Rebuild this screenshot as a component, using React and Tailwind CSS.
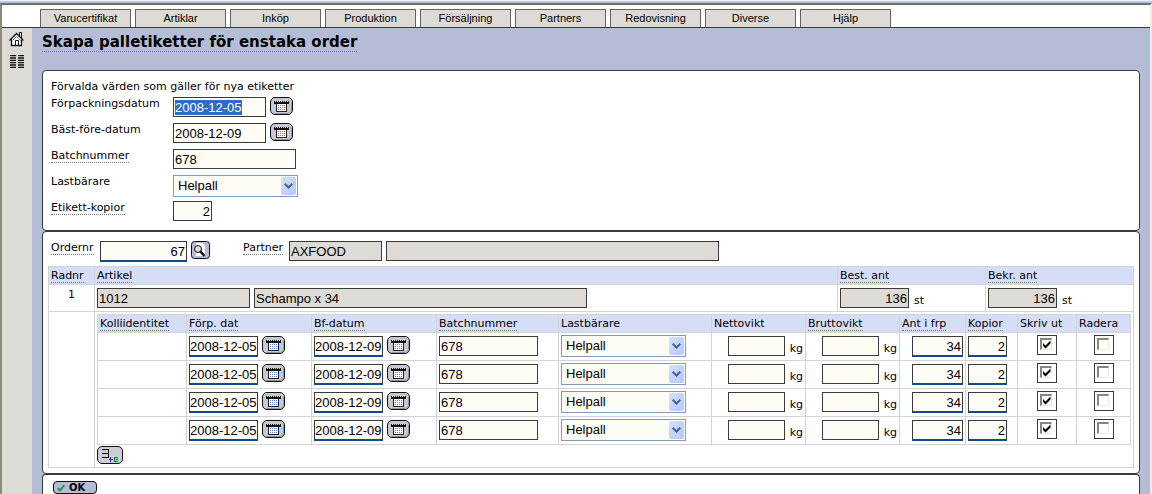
import { useEffect, useRef } from 'react';

const tabs = ['Varucertifikat', 'Artiklar', 'Inköp', 'Produktion', 'Försäljning', 'Partners', 'Redovisning', 'Diverse', 'Hjälp'];

const rows = [1, 2, 3, 4];

const columns = [
  { title: 'Kolliidentitet', dotted: true },
  { title: 'Förp. dat', dotted: true, width: 'w-[125px]' },
  { title: 'Bf-datum', dotted: true, width: 'w-[125px]' },
  { title: 'Batchnummer', dotted: true, width: 'w-[122px]' },
  { title: 'Lastbärare', width: 'w-[153px]' },
  { title: 'Nettovikt', width: 'w-[94px]' },
  { title: 'Bruttovikt', dotted: true, width: 'w-[94px]' },
  { title: 'Ant i frp', dotted: true, width: 'w-[66px]' },
  { title: 'Kopior', dotted: true, width: 'w-[52px]' },
  { title: 'Skriv ut', width: 'w-[59px]' },
  { title: 'Radera', width: 'w-[54px]' },
];

function Hint({ children }) {
  return <span className="border-b border-dotted border-[#777]">{children}</span>;
}

function Field({ className = '', required, readOnly, tight, ref, ...props }) {
  return (
    <input
      ref={ref}
      type="text"
      readOnly={readOnly}
      className={`block shrink-0 border border-[#3a3a3a] font-['Liberation_Sans',Arial,sans-serif] text-[13px] leading-[18px] outline-none selection:bg-[#316ac5] selection:text-white ${
        required ? 'h-[21px] border-b-2 border-b-[#104a8c]' : 'h-5'
      } ${readOnly ? 'bg-[#dedbd6]' : 'bg-[#fffcf6]'} ${tight ? 'px-0' : 'px-px'} ${className}`}
      {...props}
    />
  );
}

function CarrierSelect(props) {
  return (
    <div className="relative w-[125px] shrink-0">
      <select
        className="block h-[22px] w-full appearance-none border border-[#7f9db9] bg-[#fffcf6] pl-1 font-['Liberation_Sans',Arial,sans-serif] text-[13px] leading-5 outline-none"
        {...props}
      >
        <option>Helpall</option>
        <option>Halvpall</option>
      </select>
      <span className="pointer-events-none absolute inset-y-0.5 right-0.5 flex w-[15px] items-center justify-center rounded-xs bg-linear-to-br from-[#d3e0fe] to-[#b3c8f8]">
        <svg width="9" height="6" viewBox="0 0 9 6" fill="none" stroke="#4d6185" strokeWidth="2">
          <path d="M0.7 0.7 4.5 4.5 8.3 0.7" />
        </svg>
      </span>
    </div>
  );
}

function CalendarButton({ label }) {
  return (
    <button type="button" aria-label={label} className="block shrink-0">
      <svg width="23" height="18" viewBox="0 0 23 18">
        <rect x=".5" y=".5" width="22" height="17" rx="4.500" fill="#c6c8d2" stroke="#111" />
        <path d="M4 16.500H18.500Q21.500 16 21.500 13V5" stroke="#9295a4" fill="none" />
        <g shapeRendering="crispEdges">
          <path d="M6 6H17V15H6Z" fill="#222" />
          <path d="M7 7H16V14H7Z" fill="#fff" />
          <path d="M4 4H19V7H4Z" fill="#111" />
          <path d="M5 4.500H18" stroke="#ddd" strokeDasharray="1 1" />
          <path d="M8 8.500H16M8 10.500H16M8 12.500H16" stroke="#5f7fbb" strokeDasharray="1 1" />
        </g>
      </svg>
    </button>
  );
}

function SearchButton() {
  return (
    <button type="button" aria-label="Sök order" className="block shrink-0">
      <svg width="19" height="18" viewBox="0 0 19 18">
        <rect x=".5" y=".5" width="18" height="17" rx="3" fill="#b5bcd6" stroke="#111" />
        <path d="M5 2H11.500L14 4.500V15H5Z" fill="#fff" />
        <circle cx="7" cy="8" r="3.500" fill="#dcdcdc" stroke="#111" />
        <path d="M9 10 13.500 15" stroke="#111" strokeWidth="2.500" />
      </svg>
    </button>
  );
}

function Tick({ label, defaultChecked }) {
  return (
    <label className="relative mx-auto block size-5 border border-[#3a3a3a] bg-white">
      <input
        type="checkbox"
        aria-label={label}
        defaultChecked={defaultChecked}
        className="peer absolute top-0.5 left-0.5 size-3 appearance-none border-t-2 border-r border-b border-l-2 border-t-[#8a8578] border-r-[#ece9e0] border-b-[#ece9e0] border-l-[#8a8578] bg-white"
      />
      <svg className="pointer-events-none absolute top-1 left-1 hidden peer-checked:block" width="9" height="9" viewBox="0 0 9 9">
        <path d="M1 3V6L3.500 8.500 8.500 3.500V.5L3.500 5.500Z" fill="#000" />
      </svg>
    </label>
  );
}

function FormRow({ id, label, dotted, children }) {
  return (
    <div className="flex h-[26px] items-start">
      <label htmlFor={id} className="w-[122px] shrink-0 leading-4">
        {dotted ? <Hint>{label}</Hint> : label}
      </label>
      <div className="flex items-start gap-1 pt-px">{children}</div>
    </div>
  );
}

function DateCell({ value, label }) {
  return (
    <div className="flex items-start gap-1">
      <Field required tight aria-label={label} defaultValue={value} className="w-[69px]" />
      <CalendarButton label={`Välj ${label}`} />
    </div>
  );
}

function WeightCell({ label }) {
  return (
    <div className="flex items-end justify-end gap-[5px]">
      <Field aria-label={label} className="w-[57px]" />
      <span className="leading-[14px]">kg</span>
    </div>
  );
}

function PackageRow({ nr }) {
  const cell = 'h-7 border border-[#d3d3d3] px-0.5 pt-[3px] align-top';
  return (
    <tr>
      <td className={cell}></td>
      <td className={cell}><DateCell label={`Förp. dat ${nr}`} value="2008-12-05" /></td>
      <td className={cell}><DateCell label={`Bf-datum ${nr}`} value="2008-12-09" /></td>
      <td className={cell}><Field aria-label={`Batchnummer ${nr}`} defaultValue="678" className="w-[99px]" /></td>
      <td className="h-7 border border-[#d3d3d3] px-0.5 pt-0.5 align-top"><CarrierSelect aria-label={`Lastbärare ${nr}`} /></td>
      <td className={cell}><WeightCell label={`Nettovikt ${nr}`} /></td>
      <td className={cell}><WeightCell label={`Bruttovikt ${nr}`} /></td>
      <td className={cell}><Field required aria-label={`Ant i frp ${nr}`} defaultValue="34" className="ml-auto w-[51px] text-right" /></td>
      <td className={cell}><Field required aria-label={`Kopior ${nr}`} defaultValue="2" className="w-[39px] text-right" /></td>
      <td className="h-7 border border-[#d3d3d3] pt-0.5 align-top"><Tick label={`Skriv ut ${nr}`} defaultChecked /></td>
      <td className="h-7 border border-[#d3d3d3] pt-0.5 align-top"><Tick label={`Radera ${nr}`} /></td>
    </tr>
  );
}

function PackageTable() {
  return (
    <table className="w-full table-fixed border-collapse">
      <thead>
        <tr className="bg-[#d6def7]">
          {columns.map((c) => (
            <th key={c.title} className={`h-[18px] border border-[#d3d3d3] px-0.5 text-left leading-[14px] font-normal whitespace-nowrap ${c.width || ''}`}>
              {c.dotted ? <Hint>{c.title}</Hint> : c.title}
            </th>
          ))}
        </tr>
      </thead>
      <tbody>
        {rows.map((nr) => <PackageRow key={nr} nr={nr} />)}
      </tbody>
    </table>
  );
}

function OrderTable() {
  const head = 'h-[18px] border border-[#d3d3d3] px-0.5 text-left leading-[14px] font-normal';
  const cell = 'h-[27px] border border-[#d3d3d3] px-0.5 pt-[3px] align-top';
  return (
    <table className="w-full table-fixed border-collapse">
      <thead>
        <tr className="bg-[#d6def7]">
          <th className={`${head} w-[46px]`}><Hint>Radnr</Hint></th>
          <th className={head}><Hint>Artikel</Hint></th>
          <th className={`${head} w-[148px]`}><Hint>Best. ant</Hint></th>
          <th className={`${head} w-[148px]`}><Hint>Bekr. ant</Hint></th>
        </tr>
      </thead>
      <tbody>
        <tr>
          <td className={`${cell} text-center leading-[14px]`}>1</td>
          <td className={cell}>
            <div className="flex gap-1">
              <Field readOnly aria-label="Artikelnummer" defaultValue="1012" className="w-[153px]" />
              <Field readOnly aria-label="Artikelnamn" defaultValue="Schampo x 34" className="w-[333px]" />
            </div>
          </td>
          {['Best. ant', 'Bekr. ant'].map((name) => (
            <td key={name} className={cell}>
              <div className="flex items-end gap-[5px]">
                <Field readOnly aria-label={name} defaultValue="136" className="w-[69px] text-right" />
                <span className="leading-[14px]">st</span>
              </div>
            </td>
          ))}
        </tr>
        <tr>
          <td className="border border-[#d3d3d3]"></td>
          <td colSpan={3} className="border border-[#d3d3d3] px-0.5 pt-0.5 pb-[3px]">
            <PackageTable />
            <button type="button" aria-label="Lägg till rad" className="mt-px block">
              <svg width="26" height="18" viewBox="0 0 26 18">
                <rect x=".5" y=".5" width="25" height="17" rx="4.500" fill="#cccdd6" stroke="#111" />
                <g shapeRendering="crispEdges">
                  <path d="M5 3.500H11.500V11.500H5M5 7.500H11" fill="none" stroke="#111" />
                  <path d="M12 13.500H16M13.500 11V16" stroke="#2a2ac0" />
                  <path d="M17 11H21V16H17Z" fill="#7fe08c" />
                  <path d="M21 11.500H17.500V15.500H21M19 13.500H21" fill="none" stroke="#127a22" />
                </g>
              </svg>
            </button>
          </td>
        </tr>
      </tbody>
    </table>
  );
}

function Sidebar() {
  return (
    <nav className="flex w-[30px] shrink-0 flex-col items-center gap-2 bg-[#dedbd6] pt-1">
      <a href="#hem" aria-label="Hem">
        <svg width="16" height="15" viewBox="0 0 16 15" fill="none" stroke="#111">
          <path d="M2.500 8V13.500H12.500V8L7.500 3Z" fill="#fff" stroke="none" />
          <path d="M10.500 4V.5H12.500V6" fill="#fff" />
          <path d="M.5 8.500 7.500 1.500 14.500 8.500" strokeWidth="1.300" />
          <path d="M2.500 7.500V13.500H12.500V7.500" strokeWidth="1.300" />
          <path d="M3.500 8.500 7.500 4.500 11.500 8.500" stroke="#888" />
          <path d="M6.500 13V8.500H9.500V13" />
        </svg>
      </a>
      <a href="#lista" aria-label="Lista">
        <svg width="14" height="13" viewBox="0 0 14 13" stroke="#111" strokeWidth="1.300">
          <path d="M0 .7H6M0 3H6M0 5.300H6M0 7.700H6M0 10H6M0 12.300H6M8 .7H14M8 3H14M8 5.300H14M8 7.700H14M8 10H14M8 12.300H14" />
        </svg>
      </a>
    </nav>
  );
}

export default function App() {
  const firstField = useRef(null);

  useEffect(() => {
    firstField.current.focus();
    firstField.current.select();
  }, []);

  return (
    <div className="flex min-h-screen flex-col bg-[#b5bcd6] font-['DejaVu_Sans',Verdana,sans-serif] text-[11px] text-black">
      <div className="h-[3px] border-t border-[#eef3fc] bg-[#b0c8f4]" />
      <div className="flex flex-1 flex-col border-t-2 border-r-2 border-l-2 border-t-[#77705f] border-r-[#f1ecdc] border-l-[#8d8a7c]">
        <header className="flex h-[23px] shrink-0 items-end gap-1 border-b border-[#3a3a3a] bg-white pl-[38px]">
          {tabs.map((tab) => (
            <button
              key={tab}
              type="button"
              className="h-[18px] w-[91px] border border-b-0 border-[#636363] bg-[#dedbd6] pb-0.5 font-['Liberation_Sans',Arial,sans-serif] text-[11px] leading-[14px]"
            >
              {tab}
            </button>
          ))}
        </header>

        <div className="flex flex-1">
          <Sidebar />
          <main className="flex min-w-0 flex-1 flex-col px-2.5">
            <h1 className="h-[42px] pt-1 text-[15px] leading-5 font-bold">
              <Hint>Skapa palletiketter för enstaka order</Hint>
            </h1>

            <section className="rounded-[4px] border border-[#3a3a3a] bg-white px-2 pt-2 pb-1">
              <p className="h-[17px] leading-4">Förvalda värden som gäller för nya etiketter</p>
              <FormRow id="packdate" label="Förpackningsdatum">
                <Field id="packdate" ref={firstField} defaultValue="2008-12-05" className="w-[93px]" />
                <CalendarButton label="Välj förpackningsdatum" />
              </FormRow>
              <FormRow id="bestbefore" label="Bäst-före-datum">
                <Field id="bestbefore" defaultValue="2008-12-09" className="w-[93px]" />
                <CalendarButton label="Välj bäst-före-datum" />
              </FormRow>
              <FormRow id="batch" label="Batchnummer" dotted>
                <Field id="batch" defaultValue="678" className="w-[123px]" />
              </FormRow>
              <FormRow id="carrier" label="Lastbärare">
                <CarrierSelect id="carrier" />
              </FormRow>
              <FormRow id="copies" label="Etikett-kopior" dotted>
                <Field id="copies" defaultValue="2" className="w-[39px] text-right" />
              </FormRow>
            </section>

            <section className="rounded-[4px] border border-[#3a3a3a] bg-white px-[5px] pt-[9px] pb-[5px]">
              <div className="flex h-[25px] items-start pl-[3px]">
                <label htmlFor="order" className="w-[49px] leading-[14px]"><Hint>Ordernr</Hint></label>
                <Field id="order" required defaultValue="67" className="mr-1 w-[87px] text-right" />
                <SearchButton />
                <label htmlFor="partner" className="ml-[33px] w-[46px] leading-[14px]"><Hint>Partner</Hint></label>
                <Field id="partner" readOnly defaultValue="AXFOOD" className="mr-1 w-[93px]" />
                <Field readOnly aria-label="Partnernamn" className="w-[333px]" />
              </div>
              <OrderTable />
            </section>

            <section className="flex-1 rounded-t-[4px] border border-b-0 border-[#3a3a3a] bg-white px-2.5 pt-1.5">
              <button type="button" className="flex h-[13px] w-11 items-center gap-1 rounded-[4px] border border-[#111] bg-[#b5bcd6] pl-[3px] text-[10px] leading-[11px] font-bold">
                <svg width="8" height="8" viewBox="0 0 8 8" fill="none" stroke="#2f9440" strokeWidth="2">
                  <path d="M.7 4 3 6.500 7.300 1" />
                </svg>
                OK
              </button>
            </section>
          </main>
        </div>
      </div>
    </div>
  );
}
